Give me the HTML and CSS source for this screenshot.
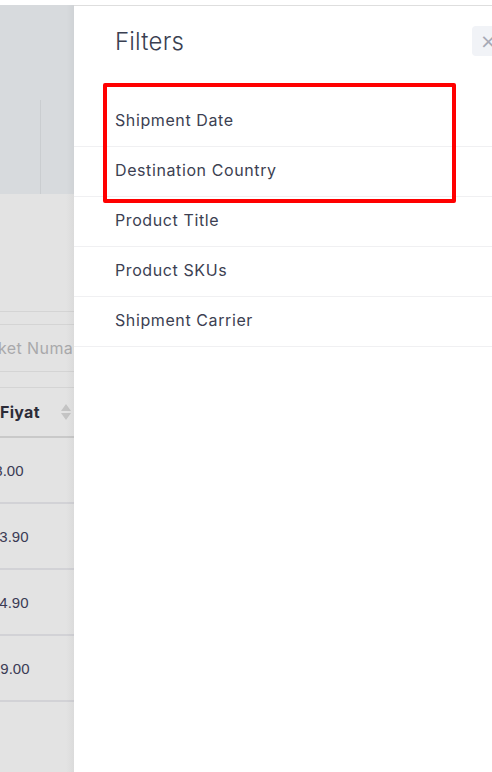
FILE: index.html
```html
<!DOCTYPE html>
<html>
<head>
<meta charset="utf-8">
<link rel="stylesheet" href="styles.css">
</head>
<body>
<div class="topstrip"></div>
<div class="app">
  <div class="page">
    <div class="page-head">
      <div class="head-top"></div>
      <div class="head-bottom"><div class="hcell"></div><div class="hcell"></div></div>
    </div>
    <div class="page-body">
      <div class="filters-area"></div>
      <div class="line-a"></div>
      <div class="search"><span class="placeholder">ket Numarası</span></div>
      <div class="gap"></div>
      <div class="th">
        <span class="th-label">Fiyat</span>
        <svg class="sort" width="10" height="16" viewBox="0 0 10 16"><path d="M5 0 L10 7 L0 7 Z" fill="#c4c4c4"/><path d="M0 9 L10 9 L5 16 Z" fill="#c4c4c4"/></svg>
      </div>
      <div class="tr"><span class="price p1">58.00</span></div>
      <div class="tr"><span class="price p2">23.90</span></div>
      <div class="tr"><span class="price p3">14.90</span></div>
      <div class="tr"><span class="price p4">19.00</span></div>
    </div>
  </div>
  <aside class="panel">
    <div class="panel-head">
      <h2 class="panel-title">Filters</h2>
      <button class="close" type="button">&times;</button>
    </div>
    <ul class="filter-list">
      <li class="filter-item">Shipment Date</li>
      <li class="filter-item">Destination Country</li>
      <li class="filter-item">Product Title</li>
      <li class="filter-item">Product SKUs</li>
      <li class="filter-item">Shipment Carrier</li>
    </ul>
    <div class="highlight"></div>
  </aside>
</div>
</body>
</html>
```

FILE: styles.css
```css
* { box-sizing: border-box; }
html, body { margin: 0; padding: 0; }
body {
  width: 492px;
  height: 772px;
  overflow: hidden;
  background: #ffffff;
  font-family: "Inter", "Open Sans", sans-serif;
}
.topstrip { height: 5px; background: #ffffff; }
.app {
  display: flex;
  height: 767px;
}
.page {
  flex: 0 0 74px;
  width: 74px;
  overflow: hidden;
  background: #e3e3e3;
  display: flex;
  flex-direction: column;
  position: relative;
}
.page::after {
  content: "";
  position: absolute;
  top: 0; right: 0; bottom: 0;
  width: 8px;
  background: linear-gradient(to right, rgba(0,0,0,0), rgba(0,0,0,0.035));
}
.page-head {
  height: 189px;
  background: #d7dadd;
  display: flex;
  flex-direction: column;
}
.head-top { height: 95px; }
.head-bottom { flex: 1; display: flex; }
.hcell { width: 41px; border-right: 1px solid #cacdd0; }
.hcell + .hcell { border-right: none; flex: 1; }
.page-body {
  display: flex;
  flex-direction: column;
}
.filters-area { height: 118px; border-bottom: 1px solid #d4d4d4; }
.line-a { height: 13px; border-bottom: 1px solid #d4d4d4; }
.search {
  height: 47px;
  border-bottom: 1px solid #d4d4d4;
  display: flex;
  align-items: center;
  white-space: nowrap;
}
.placeholder { color: #a9a9ab; font-size: 16px; letter-spacing: 0.4px; margin-left: -2px; }
.gap { height: 16px; border-bottom: 1px solid #d4d4d4; }
.th {
  height: 50px;
  border-bottom: 2px solid #c9c9c9;
  display: flex;
  align-items: center;
  white-space: nowrap;
}
.th-label { font-weight: 700; font-size: 16px; letter-spacing: 0.3px; color: #2c2c38; }
.sort { margin-left: 21px; }
.tr {
  height: 66px;
  border-bottom: 2px solid #d2d2d6;
  display: flex;
  align-items: center;
  white-space: nowrap;
}
.price {
  font-family: "Liberation Sans", Arial, sans-serif;
  font-size: 15px;
  color: #3b3b55;
}
.p1 { margin-left: -14px; }
.p2 { margin-left: -9px; }
.p3 { margin-left: -9px; }
.p4 { margin-left: -8px; }

.panel {
  flex: 1;
  position: relative;
  background: #ffffff;
  border-top: 1px solid #dedede;
  overflow: hidden;
}
.panel-head {
  height: 91px;
  display: flex;
  align-items: flex-start;
  justify-content: space-between;
  padding: 19px 0 0 41px;
}
.panel-title {
  margin: 0;
  font-size: 24px;
  font-weight: 300;
  line-height: 34px;
  color: #3a3f51;
  letter-spacing: 0.2px;
}
.close {
  margin-top: 1px;
  margin-right: -10px;
  width: 30px;
  height: 30px;
  border: none;
  border-radius: 4px;
  background: #f1f3f7;
  color: #a7aab6;
  font-size: 20px;
  line-height: 30px;
  padding: 0;
  text-align: left;
  text-indent: 8px;
  font-family: "DejaVu Sans", sans-serif;
}
.filter-list { list-style: none; margin: 0; padding: 0; }
.filter-item {
  height: 50px;
  border-bottom: 1px solid #f0f0f2;
  display: flex;
  align-items: center;
  padding: 0 0 4px 41px;
  font-size: 16px;
  letter-spacing: 0.6px;
  color: #3c3f52;
}
.highlight {
  position: absolute;
  left: 29px;
  top: 77px;
  width: 353px;
  height: 120px;
  border: 4px solid #ff0000;
  border-radius: 2px;
}
```
